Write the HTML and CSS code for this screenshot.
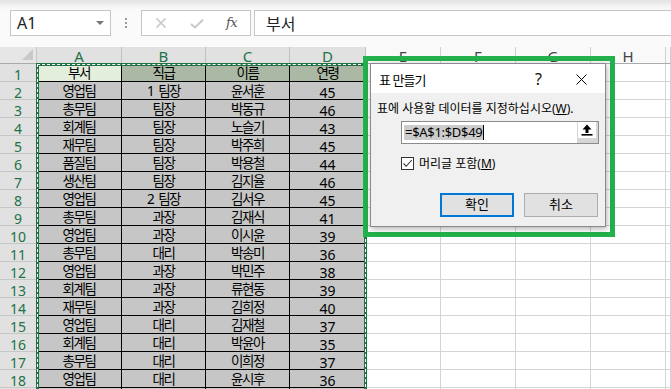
FILE: index.html
```html
<!DOCTYPE html>
<html lang="ko">
<head>
<meta charset="utf-8">
<title>표 만들기</title>
<link rel="stylesheet" href="styles.css">
</head>
<body>
<div class="app">
  <div class="topshade"></div>
  <div class="fbar">
    <div class="namebox"><span class="nb-text">A1</span><span class="nb-caret"></span></div>
    <div class="dots"><i></i><i></i><i></i></div>
    <div class="fxbox">
      <svg class="fx-x" width="14" height="10" viewBox="0 0 14 10"><path d="M2.5 0.5 L11.5 9.5 M11.5 0.5 L2.5 9.5" stroke="#c8c8c8" stroke-width="1.6" fill="none"/></svg>
      <svg class="fx-ok" width="14" height="10" viewBox="0 0 14 10"><path d="M1 5 L5 8.5 L13 0.8" stroke="#c8c8c8" stroke-width="2" fill="none"/></svg>
      <span class="fx">fx</span>
    </div>
    <div class="finput">부서</div>
  </div>
  <div class="gap"></div>
  <div class="sheet">
    <div class="corner"></div>
    <div class="ch sel">A</div><div class="ch sel">B</div><div class="ch sel">C</div><div class="ch sel">D</div>
    <div class="ch">E</div><div class="ch">F</div><div class="ch">G</div><div class="ch">H</div><div class="ch"></div>

    <div class="rh">1</div><div class="d a1">부서</div><div class="d h">직급</div><div class="d h">이름</div><div class="d h">연령</div>
    <div class="e"></div><div class="e"></div><div class="e"></div><div class="e"></div><div class="e"></div>

    <div class="rh">2</div><div class="d">영업팀</div><div class="d">1 팀장</div><div class="d">윤서훈</div><div class="d n">45</div>
    <div class="e"></div><div class="e"></div><div class="e"></div><div class="e"></div><div class="e"></div>

    <div class="rh">3</div><div class="d">총무팀</div><div class="d">팀장</div><div class="d">박동규</div><div class="d n">46</div>
    <div class="e"></div><div class="e"></div><div class="e"></div><div class="e"></div><div class="e"></div>

    <div class="rh">4</div><div class="d">회계팀</div><div class="d">팀장</div><div class="d">노슬기</div><div class="d n">43</div>
    <div class="e"></div><div class="e"></div><div class="e"></div><div class="e"></div><div class="e"></div>

    <div class="rh">5</div><div class="d">재무팀</div><div class="d">팀장</div><div class="d">박주희</div><div class="d n">45</div>
    <div class="e"></div><div class="e"></div><div class="e"></div><div class="e"></div><div class="e"></div>

    <div class="rh">6</div><div class="d">품질팀</div><div class="d">팀장</div><div class="d">박용철</div><div class="d n">44</div>
    <div class="e"></div><div class="e"></div><div class="e"></div><div class="e"></div><div class="e"></div>

    <div class="rh">7</div><div class="d">생산팀</div><div class="d">팀장</div><div class="d">김지율</div><div class="d n">46</div>
    <div class="e"></div><div class="e"></div><div class="e"></div><div class="e"></div><div class="e"></div>

    <div class="rh">8</div><div class="d">영업팀</div><div class="d">2 팀장</div><div class="d">김서우</div><div class="d n">45</div>
    <div class="e"></div><div class="e"></div><div class="e"></div><div class="e"></div><div class="e"></div>

    <div class="rh">9</div><div class="d">총무팀</div><div class="d">과장</div><div class="d">김재식</div><div class="d n">41</div>
    <div class="e"></div><div class="e"></div><div class="e"></div><div class="e"></div><div class="e"></div>

    <div class="rh">10</div><div class="d">영업팀</div><div class="d">과장</div><div class="d">이시윤</div><div class="d n">39</div>
    <div class="e"></div><div class="e"></div><div class="e"></div><div class="e"></div><div class="e"></div>

    <div class="rh">11</div><div class="d">총무팀</div><div class="d">대리</div><div class="d">박송미</div><div class="d n">36</div>
    <div class="e"></div><div class="e"></div><div class="e"></div><div class="e"></div><div class="e"></div>

    <div class="rh">12</div><div class="d">영업팀</div><div class="d">과장</div><div class="d">박민주</div><div class="d n">38</div>
    <div class="e"></div><div class="e"></div><div class="e"></div><div class="e"></div><div class="e"></div>

    <div class="rh">13</div><div class="d">회계팀</div><div class="d">과장</div><div class="d">류현동</div><div class="d n">39</div>
    <div class="e"></div><div class="e"></div><div class="e"></div><div class="e"></div><div class="e"></div>

    <div class="rh">14</div><div class="d">재무팀</div><div class="d">과장</div><div class="d">김희정</div><div class="d n">40</div>
    <div class="e"></div><div class="e"></div><div class="e"></div><div class="e"></div><div class="e"></div>

    <div class="rh">15</div><div class="d">영업팀</div><div class="d">대리</div><div class="d">김재철</div><div class="d n">37</div>
    <div class="e"></div><div class="e"></div><div class="e"></div><div class="e"></div><div class="e"></div>

    <div class="rh">16</div><div class="d">회계팀</div><div class="d">대리</div><div class="d">박윤아</div><div class="d n">35</div>
    <div class="e"></div><div class="e"></div><div class="e"></div><div class="e"></div><div class="e"></div>

    <div class="rh">17</div><div class="d">총무팀</div><div class="d">대리</div><div class="d">이희정</div><div class="d n">37</div>
    <div class="e"></div><div class="e"></div><div class="e"></div><div class="e"></div><div class="e"></div>

    <div class="rh">18</div><div class="d">영업팀</div><div class="d">대리</div><div class="d">윤시후</div><div class="d n">36</div>
    <div class="e"></div><div class="e"></div><div class="e"></div><div class="e"></div><div class="e"></div>

    <div class="rh"></div><div class="d"></div><div class="d"></div><div class="d"></div><div class="d n"></div>
    <div class="e"></div><div class="e"></div><div class="e"></div><div class="e"></div><div class="e"></div>
  </div>

  <div class="marquee"></div>

  <div class="callout">
    <div class="dialog">
      <div class="titlebar">
        <span class="ttl">표 만들기</span>
        <span class="help">?</span>
        <svg class="close" width="11" height="11" viewBox="0 0 11 11"><path d="M0.5 0.5 L10.5 10.5 M10.5 0.5 L0.5 10.5" stroke="#000" stroke-width="1" fill="none"/></svg>
      </div>
      <div class="dbody">
        <div class="lbl">표에 사용할 데이터를 지정하십시오(<u>W</u>).</div>
        <div class="range">
          <div class="rtext"><span class="selt">=$A$1:$D$49</span><span class="caret"></span></div>
          <div class="rbtn"><span class="rbox"><svg width="12" height="12" viewBox="0 0 12 12"><path d="M6 0.5 L10.5 5.5 L7.5 5.5 L7.5 9 L4.5 9 L4.5 5.5 L1.5 5.5 Z" fill="#000"/><rect x="0.5" y="10" width="11" height="1.6" fill="#000"/></svg></span></div>
        </div>
        <div class="chk">
          <span class="box"><svg width="11" height="11" viewBox="0 0 11 11"><path d="M1.5 5.5 L4.2 8.3 L9.8 2" stroke="#333" stroke-width="1.1" fill="none"/></svg></span>
          <span class="chk-l">머리글 포함(<u>M</u>)</span>
        </div>
        <div class="btns">
          <div class="btn ok">확인</div>
          <div class="btn">취소</div>
        </div>
      </div>
    </div>
  </div>
</div>
</body>
</html>
```

FILE: styles.css
```css
html, body {
  margin: 0;
  padding: 0;
  background: #ffffff;
}
.app {
  position: relative;
  width: 671px;
  height: 389px;
  overflow: hidden;
  background: #fafafa;
  font-family: "Noto Sans", "Noto Sans CJK KR", sans-serif;
}
.topshade {
  height: 10px;
  background: linear-gradient(#e2e2e2, #f2f2f2 55%, #fafafa);
}
.fbar {
  height: 26px;
  display: flex;
  padding-left: 10px;
}
.namebox {
  box-sizing: border-box;
  width: 101px;
  border: 1px solid #c6c6c6;
  background: #fff;
  display: flex;
  align-items: center;
  justify-content: space-between;
  padding: 0 6px 0 6px;
}
.nb-text {
  font-size: 16px;
  color: #222;
  line-height: 22px;
}
.nb-caret {
  width: 0;
  height: 0;
  border-left: 4px solid transparent;
  border-right: 4px solid transparent;
  border-top: 4px solid #777;
}
.dots {
  width: 30px;
  display: flex;
  flex-direction: column;
  align-items: center;
  justify-content: center;
  gap: 2px;
}
.dots i {
  display: block;
  width: 2px;
  height: 2px;
  background: #9a9a9a;
}
.fxbox {
  box-sizing: border-box;
  width: 110px;
  border: 1px solid #c6c6c6;
  background: #fff;
  display: flex;
  align-items: center;
  padding-left: 12px;
}
.fx-x { margin-right: 22px; }
.fx-ok { margin-right: 22px; margin-top: 2px; }
.fx {
  font-family: "DejaVu Serif", "Liberation Serif", serif;
  font-style: italic;
  font-size: 13px;
  line-height: 18px;
  color: #555;
  letter-spacing: -0.5px;
}
.finput {
  box-sizing: border-box;
  flex: 1;
  margin-left: 3px;
  border: 1px solid #c6c6c6;
  border-right: none;
  background: #fff;
  padding-left: 11px;
  font-family: "Noto Sans CJK KR", sans-serif;
  font-size: 16px;
  line-height: 24px;
  color: #222;
}
.gap {
  height: 11px;
}

/* sheet */
.sheet {
  display: grid;
  grid-template-columns: 37px 85px 84px 84px 76px 75px 75px 75px 75px 1fr;
  grid-template-rows: 17px;
  grid-auto-rows: 18px;
  background: #fff;
}
.sheet > div {
  box-sizing: border-box;
  white-space: nowrap;
}
.corner {
  background: #e6e6e6;
  border-right: 1px solid #c6c6c6;
  border-bottom: 1px solid #ababab;
  position: relative;
}
.corner::after {
  content: "";
  position: absolute;
  right: 3px;
  bottom: 3px;
  width: 0;
  height: 0;
  border-left: 11px solid transparent;
  border-bottom: 11px solid #c8c8c8;
}
.ch {
  background: #f9f9f9;
  border-right: 1px solid #d0d0d0;
  border-bottom: 1px solid #ababab;
  text-align: center;
  font-size: 15px;
  line-height: 14px;
  padding-top: 2px;
  color: #444;
}
.ch.sel {
  background: #e1e1e1;
  color: #217346;
  border-right-color: #c0c0c0;
}
.rh {
  background: #e1e1e1;
  border-right: 1px solid #ababab;
  border-bottom: 1px solid #c6c6c6;
  text-align: center;
  font-size: 14px;
  line-height: 13px;
  padding-top: 4px;
  color: #217346;
}
.d {
  background: #c6c6c6;
  border-right: 1px solid #000;
  border-bottom: 1px solid #000;
  text-align: center;
  font-size: 13.5px;
  line-height: 15px;
  padding-top: 2px;
  letter-spacing: -1.5px;
  word-spacing: 3px;
  color: #000;
}
.d.n {
  font-size: 14px;
  line-height: 13px;
  padding-top: 4px;
  letter-spacing: 0;
  word-spacing: 0;
}
.d.h {
  background: #abb8a3;
}
.d.a1 {
  background: #e3efdb;
}
.e {
  border-right: 1px solid #d4d4d4;
  border-bottom: 1px solid #d4d4d4;
}

/* copy/selection marquee overlay */
.marquee {
  position: absolute;
  left: 36px;
  top: 63px;
  width: 331px;
  height: 340px;
  box-sizing: border-box;
  border: 3px solid #217346;
}
.marquee::after {
  content: "";
  position: absolute;
  left: -2px;
  top: -2px;
  right: -2px;
  bottom: -2px;
  border: 1px dashed #ffffff;
}

/* highlighted dialog */
.callout {
  position: absolute;
  left: 363px;
  top: 56px;
  width: 252px;
  height: 181px;
  box-sizing: border-box;
  border: 5px solid #22b14c;
  padding: 2px 4px 5px 2px;
}
.dialog {
  box-sizing: border-box;
  height: 100%;
  border: 1px solid #8a8a8a;
  background: #f0f0f0;
  box-shadow: 1px 2px 6px rgba(0, 0, 0, 0.3);
  font-family: "Noto Sans", "Noto Sans CJK KR", sans-serif;
  color: #000;
}
.titlebar {
  height: 29px;
  background: #fff;
  display: flex;
  align-items: center;
  padding-left: 8px;
}
.ttl {
  flex: 1;
  font-family: "Noto Sans CJK KR", sans-serif;
  font-size: 13px;
  letter-spacing: -1px;
  line-height: 18px;
  padding-top: 2px;
}
.help {
  font-size: 16px;
  line-height: 20px;
  padding-top: 1px;
  color: #111;
}
.close {
  margin-left: 34px;
  margin-right: 18px;
  margin-top: 1px;
}
.dbody {
  padding: 8px 7px 9px 6px;
  display: flex;
  flex-direction: column;
}
.lbl {
  font-size: 12px;
  line-height: 16px;
  white-space: nowrap;
}
.range {
  margin-top: 4px;
  margin-left: 24px;
  width: 198px;
  height: 23px;
  box-sizing: border-box;
  border: 1px solid #8c8c8c;
  display: flex;
}
.rtext {
  flex: 1;
  background: #fff;
  display: flex;
  align-items: center;
  padding-left: 2px;
}
.selt {
  background: #cccccc;
  font-size: 13px;
  letter-spacing: -0.3px;
  line-height: 15px;
  padding: 0 1px;
}
.caret {
  width: 1px;
  height: 15px;
  background: #000;
}
.rbtn {
  width: 21px;
  background: #d6d6d6;
  padding: 0 2px 5px 1px;
  box-sizing: border-box;
  display: flex;
}
.rbox {
  flex: 1;
  background: #fff;
  display: flex;
  align-items: center;
  justify-content: center;
}
.chk {
  margin-top: 13px;
  margin-left: 24px;
  display: flex;
  align-items: center;
  height: 13px;
}
.box {
  box-sizing: border-box;
  width: 13px;
  height: 13px;
  border: 1px solid #333;
  background: #fff;
  display: flex;
}
.chk-l {
  margin-left: 5px;
  font-size: 12px;
  line-height: 13px;
}
.btns {
  margin-top: 23px;
  display: flex;
  justify-content: flex-end;
  gap: 10px;
}
.btn {
  box-sizing: border-box;
  width: 74px;
  height: 24px;
  background: #e1e1e1;
  border: 1px solid #adadad;
  text-align: center;
  font-family: "Noto Sans CJK KR", sans-serif;
  font-size: 13px;
  line-height: 20px;
}
.btn.ok {
  border: 2px solid #0078d7;
  line-height: 18px;
}
```
